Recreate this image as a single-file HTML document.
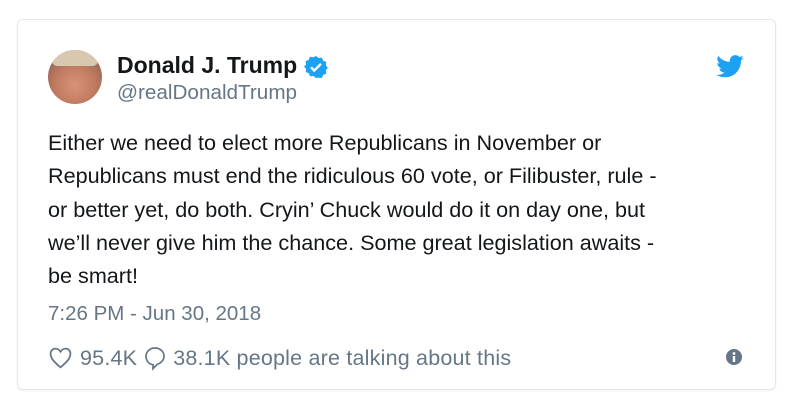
<!DOCTYPE html>
<html><head><meta charset="utf-8"><style>
body{margin:0;width:798px;height:409px;background:#fff;font-family:"Liberation Sans",sans-serif;position:relative;overflow:hidden}
.card{position:absolute;left:17px;top:19px;width:757px;height:369px;border:1px solid #e1e8ed;border-radius:6px;box-shadow:0 1px 2px rgba(0,0,0,.06)}
.av{position:absolute;left:48px;top:50px;width:54px;height:54px;border-radius:50%;overflow:hidden;background:radial-gradient(circle at 50% 65%,#d89478 0,#c07a60 45%,#9a6a5a 72%,#b8c8d8 100%)}
.av:before{content:"";position:absolute;left:4px;top:-2px;width:46px;height:18px;border-radius:20px 20px 8px 8px;background:#d8c8b0}
.name{position:absolute;left:117px;top:52px;font-size:23px;font-weight:bold;color:#14171a}
.handle{position:absolute;left:117px;top:81px;font-size:20.7px;color:#657786}
.txt{position:absolute;left:48px;top:126px;width:720px;font-size:21.6px;line-height:33.3px;color:#14171a}
.time{position:absolute;left:48px;top:302px;font-size:20.5px;color:#657786}
.foot{position:absolute;left:48px;top:344px;font-size:21.5px;letter-spacing:0.2px;color:#657786;display:flex;align-items:center}
</style></head><body>
<div class="card"></div>
<div class="av"></div>
<div class="name">Donald J. Trump</div>
<svg style="position:absolute;left:304px;top:55px" width="24" height="24" viewBox="0 0 24 24"><path fill="#1da1f2" d="M12 1l2.6 2 3.3-.4 1.2 3.1 3.1 1.2-.4 3.3 2 2.6-2 2.6.4 3.3-3.1 1.2-1.2 3.1-3.3-.4L12 23l-2.6-2-3.3.4-1.2-3.1-3.1-1.2.4-3.3L0 12l2-2.6-.4-3.3 3.1-1.2 1.2-3.1 3.3.4z"/><path d="M7 12.3l3.2 3.2L17 8.8" stroke="#fff" stroke-width="2.4" fill="none"/></svg>
<div class="handle">@realDonaldTrump</div>
<svg style="position:absolute;left:716px;top:55px" width="28" height="23" viewBox="0 0 24 20"><path fill="#1da1f2" d="M24 2.4c-.9.4-1.8.6-2.8.8 1-.6 1.8-1.6 2.2-2.7-1 .6-2 1-3.1 1.2A4.9 4.9 0 0 0 11.9 6 14 14 0 0 1 1.7.9a4.9 4.9 0 0 0 1.5 6.6c-.8 0-1.6-.3-2.2-.6 0 2.4 1.7 4.4 3.9 4.8-.7.2-1.5.2-2.2.1.6 2 2.4 3.4 4.6 3.4A9.9 9.9 0 0 1 0 17.2 14 14 0 0 0 7.5 19.4c9.1 0 14-7.5 14-14v-.6c1-.7 1.8-1.6 2.5-2.4z"/></svg>
<div class="txt">Either we need to elect more Republicans in November or<br>Republicans must end the ridiculous 60 vote, or Filibuster, rule -<br>or better yet, do both. Cryin’ Chuck would do it on day one, but<br>we’ll never give him the chance. Some great legislation awaits -<br>be smart!</div>
<div class="time">7:26 PM - Jun 30, 2018</div>
<div class="foot">
<svg width="25" height="26" viewBox="0 0 24 24" style="margin-right:7px"><path d="M12 21C5 15 2.5 12 2.5 7.8 2.5 5 4.6 3 7.2 3c2 0 3.6 1.2 4.8 3 1.2-1.8 2.8-3 4.8-3 2.6 0 4.7 2 4.7 4.8C21.5 12 19 15 12 21z" fill="none" stroke="#657786" stroke-width="1.7"/></svg>95.4K
<svg width="24" height="28" viewBox="0 0 24 26" style="margin:0 6px 0 6px"><path d="M12 3c5 0 9 3.6 9 8.3 0 4-3.2 7-7 8.2l-4 4.2v-4C5.6 19 3 15.6 3 11.3 3 6.6 7 3 12 3z" fill="none" stroke="#657786" stroke-width="1.7"/></svg>38.1K people are talking about this</div>
<svg style="position:absolute;left:726px;top:349px" width="16" height="16" viewBox="0 0 16 16"><circle cx="8" cy="8" r="8" fill="#657786"/><rect x="6.8" y="7" width="2.4" height="6" fill="#fff"/><circle cx="8" cy="4.5" r="1.4" fill="#fff"/></svg>
</body></html>
